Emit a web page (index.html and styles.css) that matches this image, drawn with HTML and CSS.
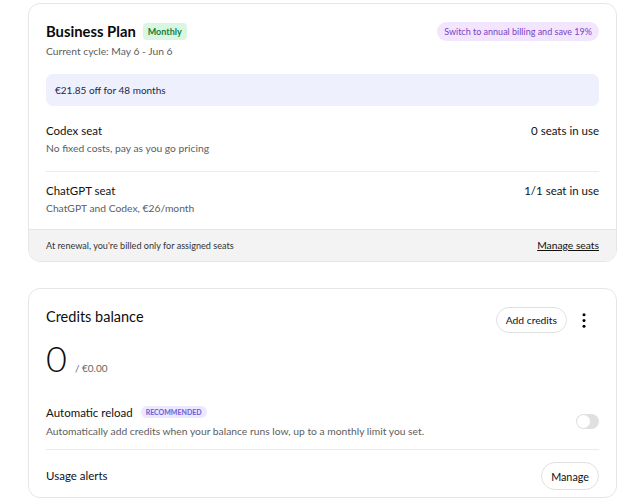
FILE: index.html
```html
<!DOCTYPE html>
<html lang="en">
<head>
    <meta charset="UTF-8">
    <meta name="viewport" content="width=device-width, initial-scale=1.0">
    <title>Billing</title>
    <link rel="stylesheet" href="styles.css">
</head>
<body>

<section class="card">
    <div class="card-body">
        <div class="plan-head">
            <div>
                <div class="plan-title">
                    <h2>Business Plan</h2>
                    <span class="badge-green">Monthly</span>
                </div>
                <div class="muted">Current cycle: May 6 - Jun 6</div>
            </div>
            <span class="pill-purple">Switch to annual billing and save 19%</span>
        </div>

        <div class="discount">€21.85 off for 48 months</div>

        <div class="seat-row">
            <div>
                <div class="row-title">Codex seat</div>
                <div class="muted">No fixed costs, pay as you go pricing</div>
            </div>
            <div class="row-title">0 seats in use</div>
        </div>
        <div class="seat-row">
            <div>
                <div class="row-title">ChatGPT seat</div>
                <div class="muted">ChatGPT and Codex, €26/month</div>
            </div>
            <div class="row-title">1/1 seat in use</div>
        </div>
    </div>
    <div class="card-foot">
        <span>At renewal, you're billed only for assigned seats</span>
        <a href="#">Manage seats</a>
    </div>
</section>

<section class="card">
    <div class="card-body">
        <div class="credits-head">
            <h3>Credits balance</h3>
            <div class="actions">
                <button class="btn">Add credits</button>
                <button class="kebab" aria-label="More">
                    <svg width="4" height="15" viewBox="0 0 4 15"><circle cx="2" cy="1.7" r="1.5"/><circle cx="2" cy="7.5" r="1.5"/><circle cx="2" cy="13.3" r="1.5"/></svg>
                </button>
            </div>
        </div>
        <div class="balance"><span class="amount">0</span><span class="of">/ €0.00</span></div>

        <div class="option-row">
            <div>
                <div class="row-title">Automatic reload <span class="badge-rec">RECOMMENDED</span></div>
                <div class="muted">Automatically add credits when your balance runs low, up to a monthly limit you set.</div>
            </div>
            <span class="toggle"></span>
        </div>
        <div class="option-row alerts">
            <div class="row-title">Usage alerts</div>
            <button class="btn">Manage</button>
        </div>
    </div>
</section>

</body>
</html>
```

FILE: styles.css
```css
body {
    font-family: Lato, "Noto Sans", sans-serif;
    color: #0d0d0d;
    margin: 3px 10px 0 28px;
    background: #fff;
}
.card {
    border: 1px solid #e6e6e6;
    border-radius: 12px;
    overflow: hidden;
    margin-bottom: 26px;
}
.card-body {
    padding: 15px 17px 0 17px;
}
.plan-head {
    display: flex;
    justify-content: space-between;
    align-items: flex-start;
}
.plan-title {
    display: flex;
    align-items: center;
    gap: 7px;
}
h2 {
    font-size: 14.8px;
    font-weight: 700;
    margin: 0;
    line-height: 24px;
    color: #0a0a0a;
}
.badge-green {
    background: #d9f6e3;
    color: #13813a;
    font-size: 9px;
    font-weight: 700;
    line-height: 13px;
    padding: 2px 5px;
    border-radius: 4px;
}
.muted {
    color: #5d5d5d;
    font-size: 10.3px;
    line-height: 17px;
}
.plan-head .muted {
    line-height: 16px;
}
.pill-purple {
    margin-top: 3px;
    background: #f1e6fd;
    color: #7b3fc6;
    font-size: 9px;
    line-height: 15px;
    padding: 2px 7px;
    border-radius: 10px;
}
.discount {
    margin-top: 15px;
    background: #eef0fd;
    border-radius: 7px;
    padding: 8px 9px;
    font-size: 10px;
    color: #1f2748;
    line-height: 16px;
}
.seat-row {
    display: flex;
    justify-content: space-between;
    padding: 16px 0 14px;
}
.seat-row + .seat-row {
    border-top: 1px solid #ebebeb;
    padding: 10px 0 13px;
}
.seat-row + .seat-row .muted {
    line-height: 16px;
}
.row-title {
    font-size: 11.5px;
    line-height: 18px;
    color: #111;
}
.card-foot {
    display: flex;
    justify-content: space-between;
    align-items: center;
    background: #f3f3f3;
    border-top: 1px solid #e4e4e4;
    padding: 8px 17px;
    font-size: 9.1px;
    color: #333;
    line-height: 15px;
}
.card-foot a {
    color: #111;
    font-size: 10.3px;
}
.credits-head {
    display: flex;
    justify-content: space-between;
    align-items: flex-start;
    margin-top: 3px;
}
h3 {
    font-size: 14.5px;
    font-weight: 400;
    margin: 0;
    line-height: 20px;
}
.actions {
    display: flex;
    align-items: center;
    gap: 15px;
}
.btn {
    font-family: inherit;
    font-size: 10.3px;
    color: #111;
    background: #fff;
    border: 1px solid #e0e0e0;
    border-radius: 14px;
    height: 26px;
    padding: 0 9px;
    cursor: pointer;
}
.kebab {
    background: none;
    border: none;
    padding: 0 13px 0 0;
    display: flex;
}
.balance {
    display: flex;
    align-items: baseline;
    gap: 8px;
    margin-top: 3px;
}
.amount {
    font-size: 36px;
    font-weight: 300;
    line-height: 44px;
}
.of {
    font-size: 10px;
    color: #666;
}
.option-row {
    display: flex;
    justify-content: space-between;
    align-items: center;
    padding: 23px 0 8px;
}
.option-row .muted {
    line-height: 19px;
}
.badge-rec {
    background: #ebe8ff;
    color: #6a5bd8;
    font-size: 7px;
    font-weight: 700;
    padding: 2px 5px;
    border-radius: 6px;
    margin-left: 5px;
    vertical-align: 2px;
}
.toggle {
    width: 23px;
    height: 15px;
    background: #e0e0e0;
    border-radius: 8px;
    position: relative;
    margin-top: -2px;
}
.toggle::after {
    content: "";
    position: absolute;
    left: 1px;
    top: 1px;
    width: 13px;
    height: 13px;
    border-radius: 50%;
    background: #fff;
}
.alerts {
    border-top: 1px solid #ebebeb;
    padding: 12px 0 7px;
}
.alerts .btn {
    font-size: 10.8px;
    height: 28px;
    padding: 0 9px;
}
```
